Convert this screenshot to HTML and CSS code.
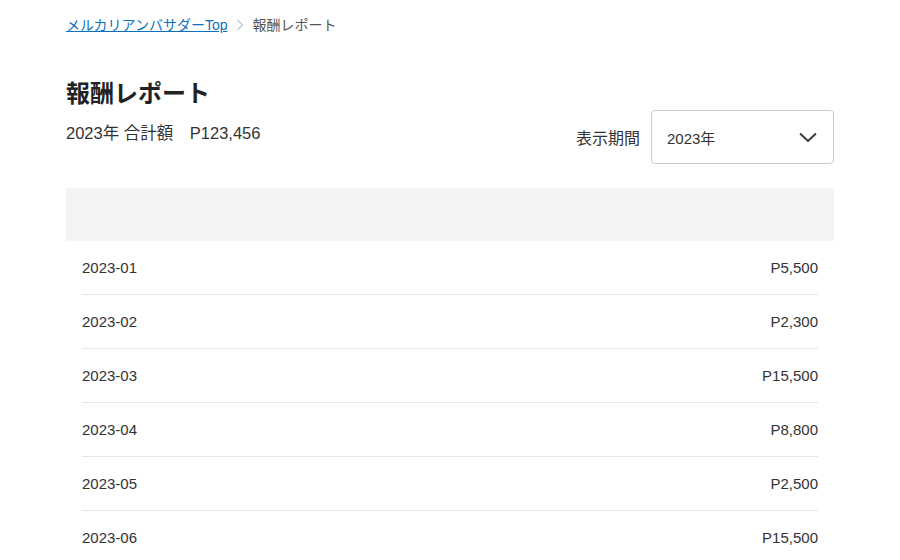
FILE: index.html
```html
<!DOCTYPE html>
<html lang="ja">
<head>
    <meta charset="UTF-8">
    <meta name="viewport" content="width=device-width, initial-scale=1.0">
    <title>報酬レポート</title>
    <link rel="stylesheet" href="styles.css">
</head>
<body>
    <div class="page">
        <nav class="breadcrumb">
            <a class="breadcrumb__link" href="#">メルカリアンバサダーTop</a>
            <span class="breadcrumb__sep">
                <svg width="8" height="12" viewBox="0 0 8 12"><path d="M1.5 1 L6.5 6 L1.5 11" fill="none" stroke="#c4c4c4" stroke-width="1.2"/></svg>
            </span>
            <span class="breadcrumb__current">報酬レポート</span>
        </nav>

        <div class="report__head">
            <div class="report__summary">
                <h1 class="report__title">報酬レポート</h1>
                <p class="report__total">2023年 合計額　P123,456</p>
            </div>
            <div class="report__period">
                <span class="report__period-label">表示期間</span>
                <div class="select">
                    <span class="select__value">2023年</span>
                    <svg class="select__arrow" width="18" height="10" viewBox="0 0 18 10"><path d="M1 1.5 L9 9 L17 1.5" fill="none" stroke="#333" stroke-width="1.8"/></svg>
                </div>
            </div>
        </div>

        <div class="table">
            <div class="table__header"></div>
            <div class="table__row"><span>2023-01</span><span>P5,500</span></div>
            <div class="table__row"><span>2023-02</span><span>P2,300</span></div>
            <div class="table__row"><span>2023-03</span><span>P15,500</span></div>
            <div class="table__row"><span>2023-04</span><span>P8,800</span></div>
            <div class="table__row"><span>2023-05</span><span>P2,500</span></div>
            <div class="table__row"><span>2023-06</span><span>P15,500</span></div>
        </div>
    </div>
</body>
</html>
```
FILE: styles.css
```css
body {
    margin: 0;
    background: #fff;
    color: #333;
    font-family: "Liberation Sans", "Noto Sans CJK JP", sans-serif;
}
.page {
    width: 768px;
    padding: 16px 0 0 66px;
}
.breadcrumb {
    display: flex;
    align-items: center;
    font-size: 14px;
    line-height: 18px;
}
.breadcrumb__link {
    color: #0f70c0;
    text-decoration: underline;
}
.breadcrumb__sep {
    display: flex;
    margin: 0 9px 0 8px;
}
.breadcrumb__current {
    color: #555;
}
.report__head {
    display: flex;
    justify-content: space-between;
    align-items: flex-start;
    margin-top: 45px;
}
.report__title {
    margin: 0;
    font-size: 24px;
    line-height: 30px;
    font-weight: bold;
    color: #222;
}
.report__total {
    margin: 12px 0 0;
    font-size: 16.5px;
    line-height: 24px;
    color: #333;
}
.report__period {
    display: flex;
    align-items: center;
    margin-top: 31px;
}
.report__period-label {
    font-size: 16px;
    margin-right: 11px;
}
.select {
    box-sizing: border-box;
    width: 183px;
    height: 54px;
    border: 1px solid #ccc;
    border-radius: 4px;
    display: flex;
    align-items: center;
    justify-content: space-between;
    padding: 0 16px 0 15px;
    font-size: 15px;
}
.select__arrow {
    display: block;
}
.table {
    margin-top: 24px;
}
.table__header {
    height: 53px;
    background: #f4f4f4;
}
.table__row {
    display: flex;
    justify-content: space-between;
    align-items: center;
    height: 53px;
    margin: 0 16px;
    border-bottom: 1px solid #e6e6e6;
    font-size: 15px;
}
```
